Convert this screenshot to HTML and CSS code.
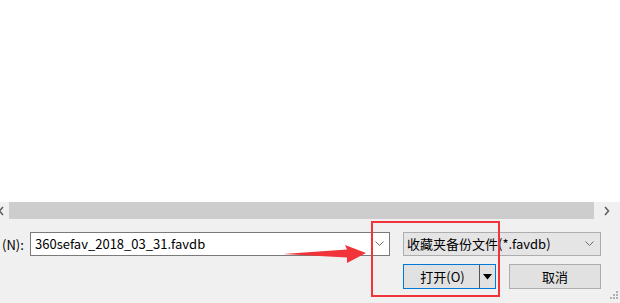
FILE: index.html
```html
<!DOCTYPE html>
<html lang="zh">
<head>
<meta charset="utf-8">
<link rel="stylesheet" href="styles.css">
</head>
<body>
<div class="dialog">
  <div class="view"></div>
  <div class="hscroll">
    <div class="arrow left"><svg width="8" height="10" viewBox="0 0 8 10"><path d="M5 1 L1.5 5 L5 9" fill="none" stroke="#606060" stroke-width="1.6"/></svg></div>
    <div class="thumb"></div>
    <div class="arrow right"><svg width="8" height="10" viewBox="0 0 8 10"><path d="M2 1 L5.5 5 L2 9" fill="none" stroke="#606060" stroke-width="1.6"/></svg></div>
  </div>
  <div class="footer">
    <div class="row">
      <div class="label">(N):</div>
      <div class="combo edit">
        <span class="value">360sefav_2018_03_31.favdb</span>
        <svg class="chev" width="9" height="6" viewBox="0 0 9 6"><path d="M0.5 0.5 L4.5 4.5 L8.5 0.5" fill="none" stroke="#6d6d6d" stroke-width="1"/></svg>
      </div>
      <div class="combo type">
        <span class="value">收藏夹备份文件(*.favdb)</span>
        <svg class="chev" width="9" height="6" viewBox="0 0 9 6"><path d="M0.5 0.5 L4.5 4.5 L8.5 0.5" fill="none" stroke="#6d6d6d" stroke-width="1"/></svg>
      </div>
    </div>
    <div class="row buttons">
      <div class="btn open">
        <span class="main">打开(O)</span>
        <span class="split"><svg width="9" height="6" viewBox="0 0 9 6"><path d="M0 0 H9 L4.5 5.5 Z" fill="#000"/></svg></span>
      </div>
      <div class="btn cancel">取消</div>
    </div>
    <div class="grip">
      <svg width="10" height="10" viewBox="0 0 10 10" fill="#b0b0b0"><rect x="8" y="0" width="2" height="2"/><rect x="5" y="3" width="2" height="2"/><rect x="8" y="3" width="2" height="2"/><rect x="2" y="6" width="2" height="2"/><rect x="5" y="6" width="2" height="2"/><rect x="8" y="6" width="2" height="2"/></svg>
    </div>
  </div>
  <div class="highlight"></div>
  <svg class="annot-arrow" width="90" height="24" viewBox="0 0 90 24">
    <path d="M0 10 L64 5.5 L62 1 L83 9 L64 19 L64 13.5 Z" fill="#f0343a"/>
  </svg>
</div>
</body>
</html>
```
FILE: styles.css
```css
html, body {
  margin: 0;
  padding: 0;
  width: 620px;
  height: 303px;
  overflow: hidden;
}
body {
  background: #f0f0f0;
  font-family: "Noto Sans CJK SC", "Noto Sans", sans-serif;
  font-size: 13px;
  color: #000;
}
.dialog {
  position: relative;
  width: 620px;
  height: 303px;
  display: flex;
  flex-direction: column;
}
.view {
  height: 202px;
  background: #fff;
}
.hscroll {
  height: 17px;
  display: flex;
  align-items: stretch;
  background: #f0f0f0;
}
.hscroll .arrow {
  display: flex;
  align-items: center;
  justify-content: center;
}
.hscroll .arrow.left {
  width: 9px;
  justify-content: flex-start;
  margin-left: -2px;
  padding-right: 2px;
}
.hscroll .arrow.right {
  width: 26px;
}
.thumb {
  flex: 1;
  background: #cdcdcd;
}
.footer {
  flex: 1;
  position: relative;
  padding: 13px 19px 0 0;
  display: flex;
  flex-direction: column;
  gap: 8px;
}
.row {
  display: flex;
  align-items: center;
}
.label {
  width: 30px;
  padding-left: 2px;
  box-sizing: border-box;
  white-space: nowrap;
  font-size: 13px;
}
.combo {
  height: 24px;
  box-sizing: border-box;
  display: flex;
  align-items: center;
  justify-content: space-between;
  white-space: nowrap;
}
.combo.edit {
  width: 360px;
  background: #fff;
  border: 1px solid #7a7a7a;
  padding: 0 5px 0 4px;
}
.combo.type {
  margin-left: 13px;
  width: 198px;
  background: #e5e5e5;
  border: 1px solid #adadad;
  padding: 0 6px 0 3px;
}
.value {
  font-size: 13px;
  line-height: 20px;
}
.chev {
  flex: none;
}
.buttons {
  justify-content: flex-end;
  gap: 13px;
}
.btn {
  height: 25px;
  box-sizing: border-box;
  background: #e1e1e1;
  border: 1px solid #adadad;
  display: flex;
  align-items: center;
  justify-content: center;
  font-size: 13px;
}
.btn.open {
  width: 93px;
  border: 1px solid #0078d7;
  justify-content: stretch;
}
.btn.open .main {
  flex: 1;
  text-align: center;
  padding-left: 2px;
}
.btn.open .split {
  width: 16px;
  height: 100%;
  border-left: 1px solid #555;
  box-sizing: border-box;
  display: flex;
  align-items: center;
  justify-content: center;
}
.btn.cancel {
  width: 92px;
}
.grip {
  position: absolute;
  right: 2px;
  bottom: 2px;
  line-height: 0;
}
.highlight {
  position: absolute;
  left: 371px;
  top: 221px;
  width: 129px;
  height: 76px;
  box-sizing: border-box;
  border: 2px solid #f0343a;
}
.annot-arrow {
  position: absolute;
  left: 283px;
  top: 244px;
}
```
